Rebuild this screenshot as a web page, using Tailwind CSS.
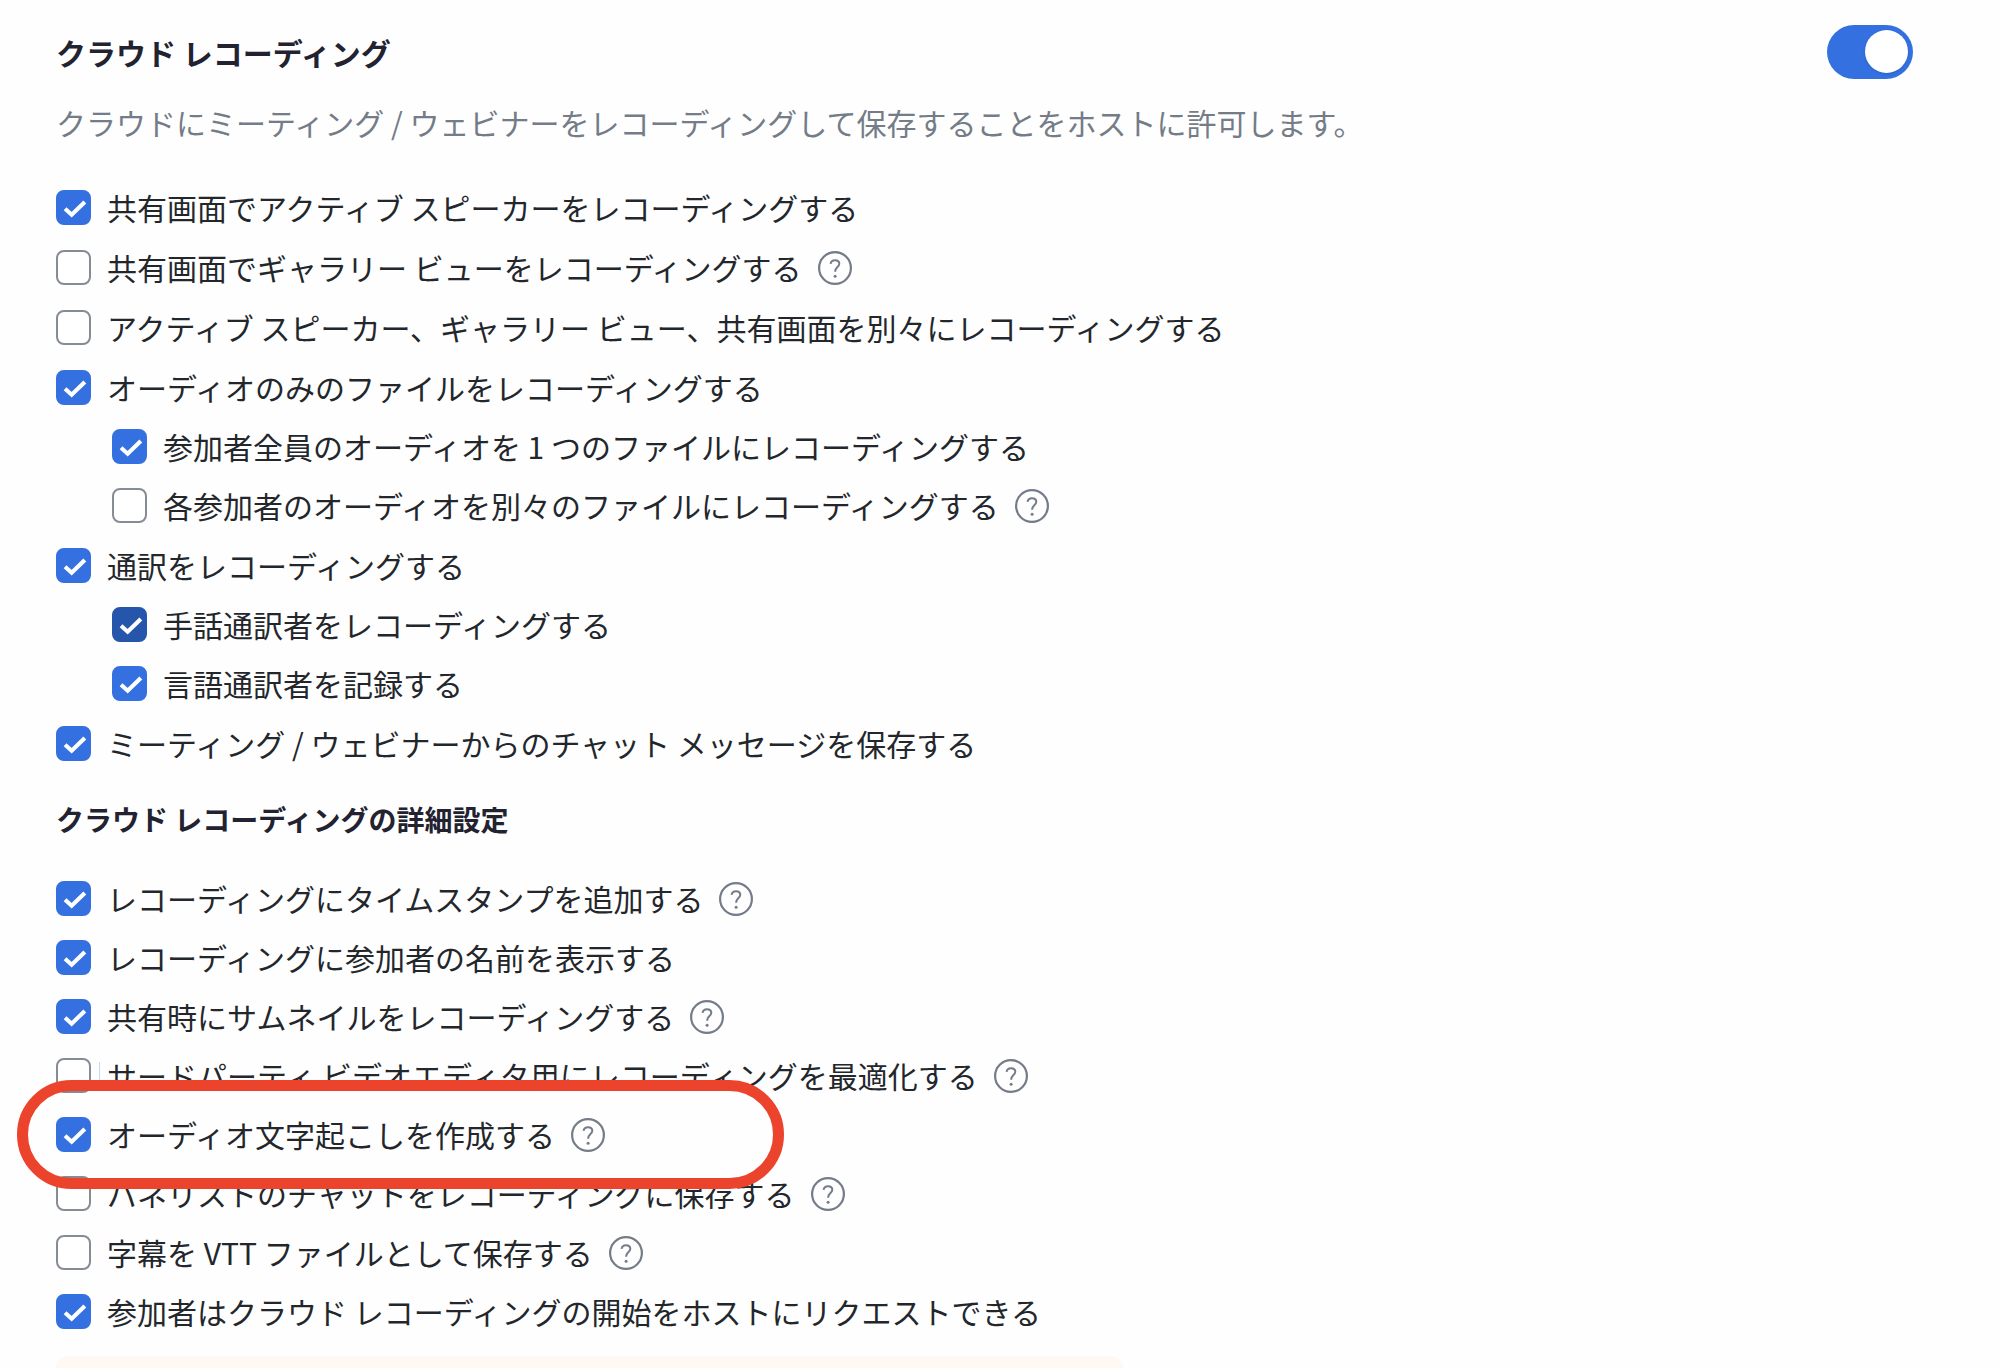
<!DOCTYPE html>
<html lang="ja">
<head>
    <meta charset="UTF-8">
    <meta name="viewport" content="width=device-width, initial-scale=1.0">
    <title>クラウド レコーディング</title>
    <script src="https://cdn.jsdelivr.net/npm/@tailwindcss/browser@4"></script>
</head>
<body class="bg-[#fefefe] min-h-screen overflow-x-hidden text-[#23272c] font-['Noto_Sans_CJK_JP',sans-serif]">
    <!-- Shared icons -->
    <svg class="hidden">
        <symbol id="icon-check" viewBox="0 0 34 34">
            <path d="M8.8 18.2L15.2 24L28 11.6" fill="none" stroke="#fff" stroke-width="4"/>
        </symbol>
        <symbol id="icon-help" viewBox="0 0 34 34">
            <g fill="none" stroke="#747c89">
                <circle cx="17" cy="17" r="15.9" stroke-width="2.2"/>
                <path d="M12.6 12.9C12.9 10.4 14.6 9.2 17 9.2C19.5 9.2 21.3 10.6 21.3 12.8C21.3 16.2 17.1 16 17.1 20.8" stroke-width="2"/>
            </g>
            <circle cx="17.1" cy="25.2" r="1.5" fill="#747c89"/>
        </symbol>
    </svg>

    <main class="pl-14 pr-[87px] pt-6 text-[30px]">
        <!-- Header -->
        <header class="flex items-center justify-between h-14">
            <h1 id="title" class="font-bold text-[#222230]">クラウド レコーディング</h1>
            <label class="relative block w-[86px] h-[54px]">
                <input type="checkbox" role="switch" checked aria-labelledby="title"
                    class="peer appearance-none block w-full h-full rounded-full bg-gray-400 checked:bg-[#3470e0]">
                <span class="absolute right-[5px] top-[5px] w-[43px] h-[43px] rounded-full bg-white shadow-sm"></span>
            </label>
        </header>
        <p class="h-[84px] leading-[84px] text-[#747c87]">クラウドにミーティング / ウェビナーをレコーディングして保存することをホストに許可します。</p>

        <!-- Recording options -->
        <ul id="recording" class="flex flex-col gap-px mt-[14px]"></ul>

        <h2 class="h-[92px] leading-[92px] mb-1 text-[28px] font-bold text-[#222230]">クラウド レコーディングの詳細設定</h2>

        <!-- Advanced options -->
        <ul id="advanced"></ul>

        <!-- Notice -->
        <div class="mt-[15px] h-3 w-[1067px] max-w-full rounded-t-2xl bg-[#fff8f3]"></div>
    </main>

    <script>
        const recording = [
            { text: '共有画面でアクティブ スピーカーをレコーディングする', checked: true },
            { text: '共有画面でギャラリー ビューをレコーディングする', help: true },
            { text: 'アクティブ スピーカー、ギャラリー ビュー、共有画面を別々にレコーディングする' },
            {
                text: 'オーディオのみのファイルをレコーディングする', checked: true,
                children: [
                    { text: '参加者全員のオーディオを 1 つのファイルにレコーディングする', checked: true },
                    { text: '各参加者のオーディオを別々のファイルにレコーディングする', help: true }
                ]
            },
            {
                text: '通訳をレコーディングする', checked: true,
                children: [
                    { text: '手話通訳者をレコーディングする', checked: true, active: true },
                    { text: '言語通訳者を記録する', checked: true }
                ]
            },
            { text: 'ミーティング / ウェビナーからのチャット メッセージを保存する', checked: true }
        ];

        const advanced = [
            { text: 'レコーディングにタイムスタンプを追加する', checked: true, help: true },
            { text: 'レコーディングに参加者の名前を表示する', checked: true },
            { text: '共有時にサムネイルをレコーディングする', checked: true, help: true },
            { text: 'サードパーティ ビデオエディタ用にレコーディングを最適化する', help: true, caret: true },
            { text: 'オーディオ文字起こしを作成する', checked: true, help: true, marked: true },
            { text: 'パネリストのチャットをレコーディングに保存する', help: true },
            { text: '字幕を VTT ファイルとして保存する', help: true },
            { text: '参加者はクラウド レコーディングの開始をホストにリクエストできる', checked: true }
        ];

        const renderOption = (option) => {
            const fill = option.active
                ? 'checked:bg-[#2655ac] checked:border-[#2655ac]'
                : 'checked:bg-[#3470e0] checked:border-[#3470e0]';

            const help = option.help
                ? `<button type="button" aria-label="ヘルプ" class="shrink-0">
                       <svg class="w-[34px] h-[34px]"><use href="#icon-help"/></svg>
                   </button>`
                : '';

            const caret = option.caret
                ? '<span class="absolute left-[43px] top-[16px] w-px h-7 bg-[#c3d8f8]"></span>'
                : '';

            // Red outline around the highlighted option
            const mark = option.marked
                ? '<span class="absolute z-10 -left-[39px] -top-[25px] w-[767px] h-[109px] rounded-full border-[11px] border-[#ec432d] pointer-events-none"></span>'
                : '';

            const children = option.children
                ? `<ul class="pl-14">${option.children.map(renderOption).join('')}</ul>`
                : '';

            return `
                <li>
                    <div class="relative flex items-center gap-4 h-[59px]">
                        <label class="flex items-center gap-4 whitespace-nowrap">
                            <span class="grid shrink-0">
                                <input type="checkbox" ${option.checked ? 'checked' : ''}
                                    class="peer col-start-1 row-start-1 appearance-none w-[35px] h-[35px] rounded-lg border-2 border-[#858c96] bg-white ${fill}">
                                <svg class="col-start-1 row-start-1 w-[35px] h-[35px] invisible peer-checked:visible pointer-events-none"><use href="#icon-check"/></svg>
                            </span>
                            <span>${option.text}</span>
                        </label>
                        ${help}${caret}${mark}
                    </div>
                    ${children}
                </li>
            `;
        };

        document.getElementById('recording').innerHTML = recording.map(renderOption).join('');
        document.getElementById('advanced').innerHTML = advanced.map(renderOption).join('');
    </script>
</body>
</html>
